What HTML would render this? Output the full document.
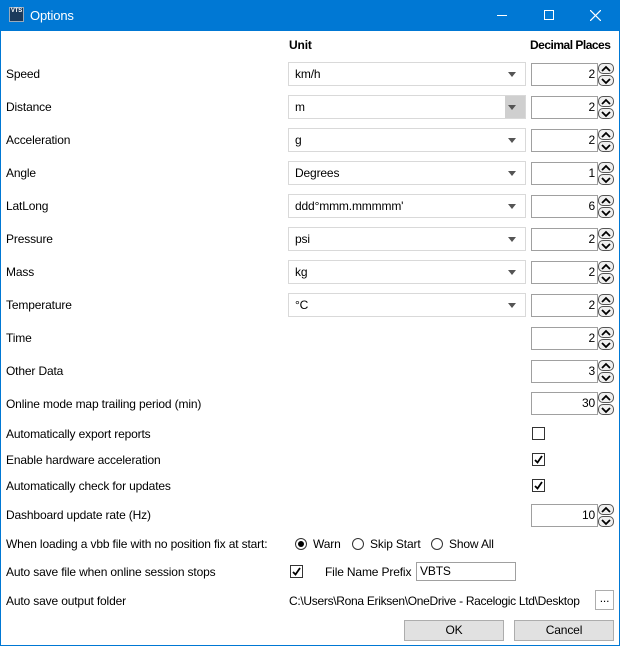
<!DOCTYPE html>
<html><head><meta charset="utf-8"><style>
*{box-sizing:border-box;margin:0;padding:0}
body{width:620px;height:646px;overflow:hidden;background:#fff;font-family:"Liberation Sans",sans-serif;font-size:12px;letter-spacing:-0.15px;color:#000;position:relative}
.win{position:absolute;left:0;top:0;width:620px;height:646px;border:1px solid #0078d4;border-top:none}
.tb{position:absolute;left:0;top:0;width:620px;height:31px;background:#0078d4;color:#fff}
.a{position:absolute;white-space:nowrap}
.lbl{position:absolute;left:6px;line-height:14px}
.cb{position:absolute;left:288px;width:238px;height:24px;border:1px solid #d9d9d9;background:#fff;padding-left:6px;line-height:22px}
.cb:after{content:"";position:absolute;right:9px;top:9px;border-left:4px solid transparent;border-right:4px solid transparent;border-top:5px solid #555}
.cb.g:before{content:"";position:absolute;right:0;top:0;width:20px;height:22px;background:#cfcfcf}
.sp{position:absolute;left:531px;width:67px;height:23px;border:1px solid #a0a0a0;text-align:right;padding-right:2px;line-height:21px}
.ar{position:absolute;left:598px;width:16px;height:11px;border:1px solid #555;border-radius:5px;background:#f0f0f0}
.ar svg{position:absolute;left:2px;top:1px}
.chk{position:absolute;width:13px;height:13px;border:1px solid #333;background:#fff}
.rad{position:absolute;width:12px;height:12px;border:1px solid #333;border-radius:50%}
.btn{position:absolute;height:21px;border:1px solid #adadad;background:#e1e1e1;text-align:center;line-height:19px}
</style></head><body>
<div class="win"></div>
<div class="tb">
<div class="a" style="left:9px;top:7px;width:15px;height:15px;background:#1b3a5c;border:1px solid #9ab;color:#fff;font-size:6px;font-weight:bold;line-height:7px;text-align:center">VTS</div>
<div class="a" style="left:30px;top:8px;font-size:13px">Options</div>
<div class="a" style="left:497px;top:15px;width:10px;height:1px;background:#fff"></div>
<div class="a" style="left:544px;top:10px;width:10px;height:10px;border:1px solid #fff"></div>
<svg class="a" style="left:590px;top:10px" width="11" height="11"><path d="M0 0L11 11M11 0L0 11" stroke="#fff" stroke-width="1.2"/></svg>
</div>
<div class="a" style="left:289px;top:38px;font-weight:bold">Unit</div>
<div class="a" style="left:530px;top:38px;font-weight:bold;letter-spacing:-0.5px">Decimal Places</div>

<div class="lbl" style="top:67px">Speed</div>
<div class="lbl" style="top:100px">Distance</div>
<div class="lbl" style="top:133px">Acceleration</div>
<div class="lbl" style="top:166px">Angle</div>
<div class="lbl" style="top:199px">LatLong</div>
<div class="lbl" style="top:232px">Pressure</div>
<div class="lbl" style="top:265px">Mass</div>
<div class="lbl" style="top:298px">Temperature</div>
<div class="lbl" style="top:331px">Time</div>
<div class="lbl" style="top:364px">Other Data</div>
<div class="lbl" style="top:397px">Online mode map trailing period (min)</div>
<div class="lbl" style="top:427px">Automatically export reports</div>
<div class="lbl" style="top:453px">Enable hardware acceleration</div>
<div class="lbl" style="top:479px">Automatically check for updates</div>
<div class="lbl" style="top:508px">Dashboard update rate (Hz)</div>
<div class="lbl" style="top:537px">When loading a vbb file with no position fix at start:</div>
<div class="lbl" style="top:565px">Auto save file when online session stops</div>
<div class="lbl" style="top:594px">Auto save output folder</div>

<div class="cb" style="top:62px">km/h</div>
<div class="cb g" style="top:95px">m</div>
<div class="cb" style="top:128px">g</div>
<div class="cb" style="top:161px">Degrees</div>
<div class="cb" style="top:194px">ddd°mmm.mmmmm'</div>
<div class="cb" style="top:227px">psi</div>
<div class="cb" style="top:260px">kg</div>
<div class="cb" style="top:293px">°C</div>

<div class="sp" style="top:63px">2</div>
<div class="sp" style="top:96px">2</div>
<div class="sp" style="top:129px">2</div>
<div class="sp" style="top:162px">1</div>
<div class="sp" style="top:195px">6</div>
<div class="sp" style="top:228px">2</div>
<div class="sp" style="top:261px">2</div>
<div class="sp" style="top:294px">2</div>
<div class="sp" style="top:327px">2</div>
<div class="sp" style="top:360px">3</div>
<div class="sp" style="top:392px">30</div>
<div class="sp" style="top:504px">10</div>

<div id="arrows"></div>
<script>
var tops=[63,96,129,162,195,228,261,294,327,360,392,504],h='';
tops.forEach(function(t){
h+='<div class="ar" style="top:'+(t)+'px"><svg width="10" height="8"><path d="M1 6L5 2L9 6" fill="none" stroke="#000" stroke-width="1.8"/></svg></div>';
h+='<div class="ar" style="top:'+(t+12)+'px"><svg width="10" height="8"><path d="M1 2L5 6L9 2" fill="none" stroke="#000" stroke-width="1.8"/></svg></div>';
});
document.getElementById('arrows').innerHTML=h;
</script>

<div class="chk" style="left:532px;top:427px"></div>
<div class="chk" style="left:532px;top:453px"><svg width="11" height="11"><path d="M2 6L4.5 8.5L9 2" fill="none" stroke="#000" stroke-width="1.8"/></svg></div>
<div class="chk" style="left:532px;top:479px"><svg width="11" height="11"><path d="M2 6L4.5 8.5L9 2" fill="none" stroke="#000" stroke-width="1.8"/></svg></div>

<div class="rad" style="left:295px;top:538px"><div style="position:absolute;left:2px;top:2px;width:6px;height:6px;border-radius:50%;background:#000"></div></div>
<div class="a" style="left:313px;top:537px">Warn</div>
<div class="rad" style="left:352px;top:538px"></div>
<div class="a" style="left:370px;top:537px">Skip Start</div>
<div class="rad" style="left:431px;top:538px"></div>
<div class="a" style="left:449px;top:537px">Show All</div>

<div class="chk" style="left:290px;top:565px"><svg width="11" height="11"><path d="M2 6L4.5 8.5L9 2" fill="none" stroke="#000" stroke-width="1.8"/></svg></div>
<div class="a" style="left:325px;top:565px">File Name Prefix</div>
<div class="a" style="left:416px;top:562px;width:100px;height:19px;border:1px solid #a0a0a0;padding-left:3px;line-height:17px">VBTS</div>

<div class="a" style="left:289px;top:594px;letter-spacing:-0.3px">C:\Users\Rona Eriksen\OneDrive - Racelogic Ltd\Desktop</div>
<div class="btn" style="left:595px;top:590px;width:19px;height:20px;background:#fff;line-height:15px">...</div>

<div class="btn" style="left:404px;top:620px;width:100px">OK</div>
<div class="btn" style="left:514px;top:620px;width:100px">Cancel</div>
</body></html>
